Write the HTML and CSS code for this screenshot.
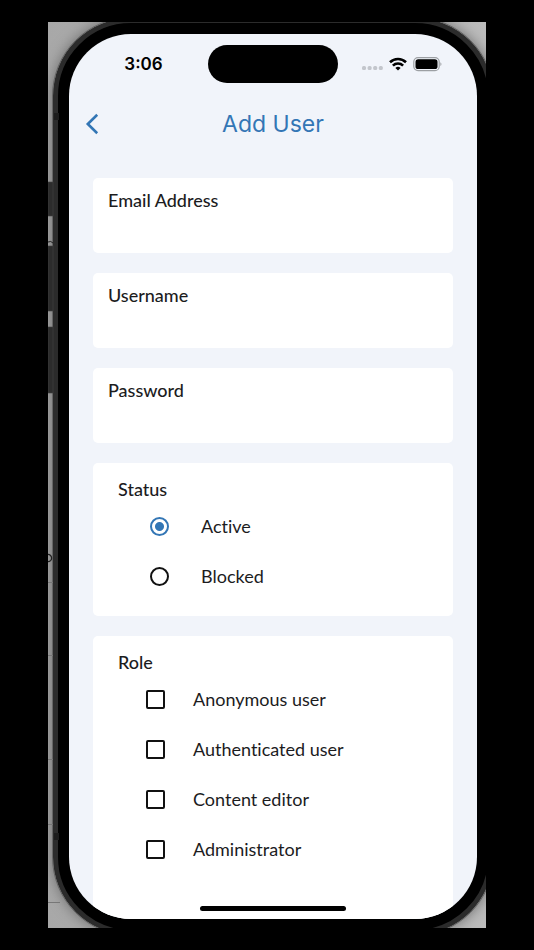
FILE: index.html
```html
<!doctype html>
<html lang="en">
<head>
    <meta charset="UTF-8">
    <meta name="viewport" content="width=device-width, initial-scale=1">
    <title>Add User</title>
    <link rel="stylesheet" href="styles.css">
</head>
<body>
    <div class="stage">
        <div class="phone">
            <div class="screen">
                <div class="status-bar">
                    <span class="time">3:06</span>
                    <span class="island"></span>
                    <div class="signals">
                        <svg width="21" height="20" viewBox="0 0 21 20" fill="#c3c6cc">
                            <rect x="0" y="12" width="4" height="4" rx="1.5"/>
                            <rect x="5.6" y="12" width="4" height="4" rx="1.5"/>
                            <rect x="11.2" y="12" width="4" height="4" rx="1.5"/>
                            <rect x="16.8" y="12" width="4" height="4" rx="1.5"/>
                        </svg>
                        <svg width="18" height="20" viewBox="0 0 18 20" fill="none" stroke="#000" stroke-width="2.6">
                            <path d="M1 8.2a11.5 11.5 0 0 1 16 0"/>
                            <path d="M3.9 11.6a7.3 7.3 0 0 1 10.2 0"/>
                            <path d="M9 16.6l-2.6-2.7a3.8 3.8 0 0 1 5.2 0z" fill="#000" stroke="none"/>
                        </svg>
                        <svg width="29" height="20" viewBox="0 0 29 20">
                            <rect x=".8" y="3.6" width="25.4" height="13" rx="4.2" fill="none" stroke="#9c9fa3" stroke-width="1.2"/>
                            <rect x="2.5" y="5.2" width="22" height="9.9" rx="2.7" fill="#000"/>
                            <path d="M27.4 8.2c1.4.6 1.4 3.2 0 3.8z" fill="#9c9fa3"/>
                        </svg>
                    </div>
                </div>
                <header class="nav">
                    <button class="back" type="button" aria-label="Back">
                        <svg width="14" height="22" viewBox="0 0 14 22" fill="none" stroke="#3376b5" stroke-width="2.6">
                            <path d="M12.2 1.8L2.8 11l9.4 9.2"/>
                        </svg>
                    </button>
                    <h1>Add User</h1>
                </header>
                <form class="form">
                    <div class="card field">
                        <label for="email">Email Address</label>
                        <input type="email" id="email">
                    </div>
                    <div class="card field">
                        <label for="username">Username</label>
                        <input type="text" id="username">
                    </div>
                    <div class="card field">
                        <label for="password">Password</label>
                        <input type="password" id="password">
                    </div>
                    <fieldset class="card group radios">
                        <legend>Status</legend>
                        <label><input type="radio" name="status" checked>Active</label>
                        <label><input type="radio" name="status">Blocked</label>
                    </fieldset>
                    <fieldset class="card group checks">
                        <legend>Role</legend>
                        <label><input type="checkbox" name="role">Anonymous user</label>
                        <label><input type="checkbox" name="role">Authenticated user</label>
                        <label><input type="checkbox" name="role">Content editor</label>
                        <label><input type="checkbox" name="role">Administrator</label>
                    </fieldset>
                </form>
                <span class="home"></span>
            </div>
        </div>
        <!-- side buttons and the desk behind the phone -->
        <svg class="edge" width="12" height="906" viewBox="0 0 12 906">
            <g fill="#2c2c2c" stroke="#444" stroke-width=".6">
                <rect x="0" y="160" width="5" height="34"/>
                <rect x="0" y="224" width="5" height="65"/>
                <rect x="0" y="305" width="5" height="66"/>
            </g>
            <path d="M0 220q3-1.500 5 1" fill="none" stroke="#222"/>
            <path d="M0 560.500h5M0 633.500h5M0 737.500h5M0 802.500h5M0 880.500h12" stroke="#777"/>
            <circle cx="0" cy="536" r="3.600" fill="none" stroke="#222" stroke-width="1.300"/>
            <path d="M6 91h5v7h-5zM6 811h5v7h-5z" fill="#1c1c1c"/>
        </svg>
    </div>
</body>
</html>
```

FILE: styles.css
```css
*{
    box-sizing: border-box;
    margin: 0;
    padding: 0;
}
body{
    display: flex;
    min-height: 100vh;
    padding: 22px 48px;
    background: #000;
    color: #1c1c1e;
    font-family: Lato, "Open Sans", sans-serif;
    font-size: 18px;
    font-variant-ligatures: none;
}
.stage{
    position: relative;
    display: flex;
    flex: 1;
    overflow: hidden;
    background: linear-gradient(90deg, #a8a8a8, #bcbcbc);
}
/* the phone is a little larger than the stage, which crops it */
.phone{
    display: flex;
    flex: 1;
    margin: -4px -7px -7px 5px;
    padding: 11px;
    border: 5px solid #2b2b2b;
    border-radius: 78px;
    outline: 1px solid #666;
    background: #000;
    box-shadow: 0 0 14px #666;
}
.screen{
    position: relative;
    display: flex;
    flex: 1;
    flex-direction: column;
    overflow: hidden;
    border-radius: 62px;
    background: #f1f4fa;
}
.status-bar{
    display: grid;
    grid-template-columns: 1fr 130px 1fr;
    align-items: center;
    padding-top: 11px;
}
.time{
    padding-left: 10px;
    color: #000;
    font: 600 17px/24px Inter, sans-serif;
    text-align: center;
}
.island{
    height: 38px;
    border-radius: 19px;
    background: #000;
}
.signals{
    display: flex;
    justify-content: center;
    gap: 6px;
    padding-right: 12px;
}
.nav{
    display: grid;
    grid-template-columns: 46px 1fr 46px;
    align-items: center;
    height: 82px;
}
.back{
    display: flex;
    justify-content: center;
    border: 0;
    background: none;
    cursor: pointer;
}
.nav h1{
    color: #3376b5;
    font: 400 23px/32px Inter, sans-serif;
    text-align: center;
}
.form{
    display: flex;
    flex: 1;
    flex-direction: column;
    gap: 20px;
    padding: 13px 24px 0;
}
.card{
    border: 0;
    border-radius: 5px;
    background: #fff;
}
.field{
    display: flex;
    flex-direction: column;
    height: 75px;
    padding: 10px 15px 8px;
    line-height: 24px;
}
.field label,
.group legend{
    font-weight: 500;
}
.field input{
    flex: 1;
    min-height: 0;
    border: 0;
    outline: 0;
    background: none;
    font: inherit;
}
.group{
    padding: 14px 25px 15px;
}
.group legend{
    float: left;
    width: 100%;
    line-height: 24px;
}
.group label{
    display: flex;
    clear: both;
    align-items: center;
    height: 50px;
    padding-left: 28px;
}
.group input{
    appearance: none;
    width: 19px;
    height: 19px;
    margin-right: 28px;
    border: 2px solid #111;
    border-radius: 2px;
}
.radios label{
    padding-left: 32px;
}
.radios input{
    margin-right: 32px;
    border-radius: 50%;
}
.radios input:checked{
    border-color: #3376b5;
    background: radial-gradient(circle, #3376b5 4px, #fff 5px);
}
.checks{
    flex: 1;
    border-radius: 5px 5px 0 0;
}
.home{
    position: absolute;
    bottom: 8px;
    left: 50%;
    width: 146px;
    height: 5px;
    margin-left: -73px;
    border-radius: 3px;
    background: #000;
}
.edge{
    position: absolute;
    top: 0;
    left: 0;
}
```
